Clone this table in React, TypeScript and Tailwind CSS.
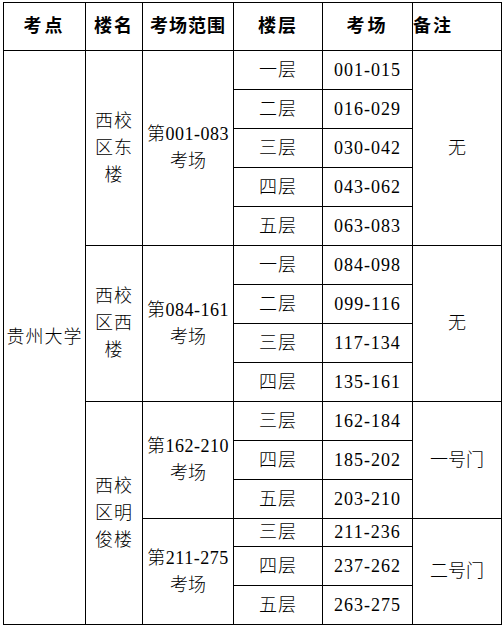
import React from "react";

type Floor = { floor: string; range: string };

const groups = [
  {
    building: ["西校", "区东", "楼"],
    blocks: [
      {
        label: "第001-083",
        note: "无",
        floors: [
          { floor: "一层", range: "001-015" },
          { floor: "二层", range: "016-029" },
          { floor: "三层", range: "030-042" },
          { floor: "四层", range: "043-062" },
          { floor: "五层", range: "063-083" },
        ],
      },
    ],
  },
  {
    building: ["西校", "区西", "楼"],
    blocks: [
      {
        label: "第084-161",
        note: "无",
        floors: [
          { floor: "一层", range: "084-098" },
          { floor: "二层", range: "099-116" },
          { floor: "三层", range: "117-134" },
          { floor: "四层", range: "135-161" },
        ],
      },
    ],
  },
  {
    building: ["西校", "区明", "俊楼"],
    blocks: [
      {
        label: "第162-210",
        note: "一号门",
        floors: [
          { floor: "三层", range: "162-184" },
          { floor: "四层", range: "185-202" },
          { floor: "五层", range: "203-210" },
        ],
      },
      {
        label: "第211-275",
        note: "二号门",
        floors: [
          { floor: "三层", range: "211-236" },
          { floor: "四层", range: "237-262" },
          { floor: "五层", range: "263-275" },
        ],
      },
    ],
  },
];

const cell = "border border-black p-0 text-center align-middle";

export default function App() {
  const total = groups.reduce(
    (n, g) => n + g.blocks.reduce((m, b) => m + b.floors.length, 0),
    0
  );
  const rows: React.ReactNode[] = [];
  let first = true;

  groups.forEach((g, gi) => {
    const gSpan = g.blocks.reduce((m, b) => m + b.floors.length, 0);
    g.blocks.forEach((b, bi) => {
      b.floors.forEach((f: Floor, fi) => {
        // 211-236 那一行比其它行矮
        const h = f.range === "211-236" ? "h-[28px]" : "h-[39px]";
        rows.push(
          <tr key={`${gi}-${bi}-${fi}`} className={h}>
            {first && (
              <td rowSpan={total} className={`${cell} tracking-[1px]`}>
                贵州大学
              </td>
            )}
            {bi === 0 && fi === 0 && (
              <td rowSpan={gSpan} className={`${cell} leading-[27px]`}>
                {g.building.map((t) => (
                  <div key={t} className="tracking-[1px]">
                    {t}
                  </div>
                ))}
              </td>
            )}
            {fi === 0 && (
              <td rowSpan={b.floors.length} className={`${cell} leading-[27px]`}>
                <div className="tracking-[0.5px] whitespace-nowrap">{b.label}</div>
                <div>考场</div>
              </td>
            )}
            <td className={`${cell} tracking-[1px]`}>{f.floor}</td>
            <td className={`${cell} tracking-[1px]`}>{f.range}</td>
            {fi === 0 && (
              <td rowSpan={b.floors.length} className={cell}>
                {b.note}
              </td>
            )}
          </tr>
        );
        first = false;
      });
    });
  });

  return (
    <div className="bg-white w-[504px] h-[627px] pt-[2px] pl-[3px] font-['Liberation_Serif','Noto_Sans_CJK_SC',serif] font-light text-[18px] text-black">
      <table className="border-collapse table-fixed w-[498px]">
        <colgroup>
          <col className="w-[82px]" />
          <col className="w-[57px]" />
          <col className="w-[91px]" />
          <col className="w-[89px]" />
          <col className="w-[90px]" />
          <col className="w-[89px]" />
        </colgroup>
        <thead>
          <tr className="h-[48px] font-bold">
            <th className={`${cell} tracking-[3px]`}>考点</th>
            <th className={`${cell} tracking-[2px]`}>楼名</th>
            <th className={`${cell} tracking-[1px]`}>考场范围</th>
            <th className={`${cell} tracking-[2px]`}>楼层</th>
            <th className={`${cell} tracking-[3px]`}>考场</th>
            <th className="border border-black p-0 text-left align-middle tracking-[2px]">
              备注
            </th>
          </tr>
        </thead>
        <tbody>{rows}</tbody>
      </table>
    </div>
  );
}
